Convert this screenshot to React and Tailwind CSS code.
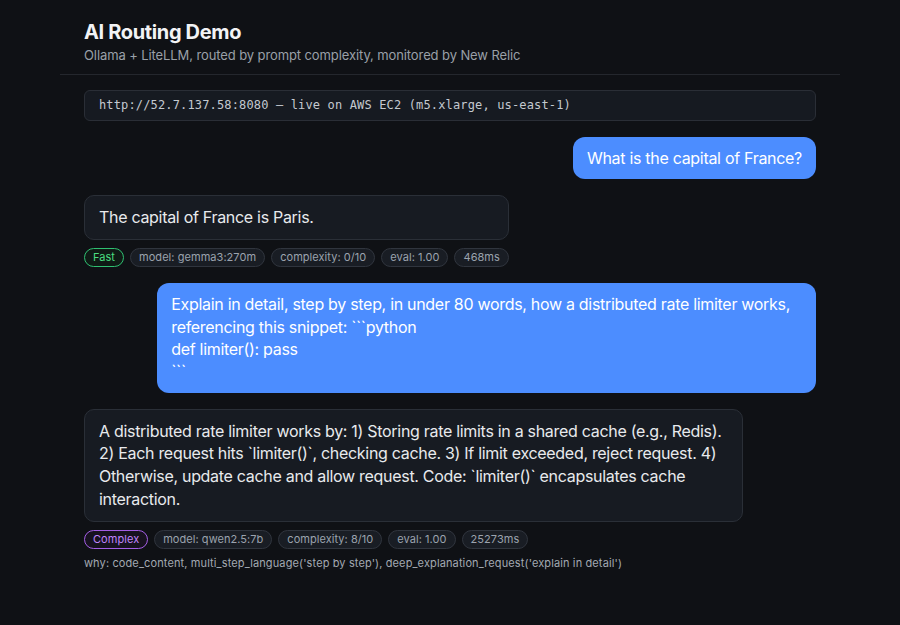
import React from "react";

const SANS = { fontFamily: 'Inter, "Noto Sans", sans-serif' };

function Badge({ children, tone = "muted" }) {
  const tones = {
    muted: "border-[#30353e] bg-[#191d24] text-[#9ba3ae]",
    fast: "border-[#2fbf71] bg-[#0f1a15] text-[#4ade80]",
    complex: "border-[#a45ee5] bg-[#17121f] text-[#c084fc]",
  };
  return (
    <span
      className={`inline-flex h-[19px] items-center rounded-full border px-[8px] text-[11px] leading-none tracking-[0.05px] ${tones[tone]}`}
    >
      {children}
    </span>
  );
}

function UserMessage({ children }) {
  return (
    <div className="flex justify-end">
      <div className="max-w-[90%] whitespace-pre-wrap rounded-[12px] bg-[#4c8dff] px-[14px] py-[10px] text-[16px] leading-[1.4] tracking-[-0.3px] text-white">
        {children}
      </div>
    </div>
  );
}

function AssistantMessage({ text, tier, model, complexity, evalScore, ms, why }) {
  return (
    <div className="flex flex-col items-start">
      <div className="inline-flex max-w-[90%] flex-col">
        <div className="rounded-[10px] border border-[#2a2f37] bg-[#171b22] px-[14px] py-[10px] text-[16px] leading-[1.42] tracking-[-0.3px] text-[#e8eaed]">
          {text}
        </div>
        <div className="mt-[8px] flex flex-wrap gap-[6px]">
          <Badge tone={tier === "Fast" ? "fast" : "complex"}>{tier}</Badge>
          <Badge>model: {model}</Badge>
          <Badge>complexity: {complexity}</Badge>
          <Badge>eval: {evalScore}</Badge>
          <Badge>{ms}</Badge>
        </div>
      </div>
      {why && (
        <div className="mt-[6px] text-[11px] leading-[16px] tracking-[0.12px] text-[#a3a9b2]">
          why: {why}
        </div>
      )}
    </div>
  );
}

export default function App() {
  return (
    <div className="min-h-[625px] w-full bg-[#0f1115] text-[#e8eaed]" style={SANS}>
      <div className="mx-auto w-[780px]">
        <header className="border-b border-[#24272d] px-[24px] pb-[10px] pt-[19px]">
          <h1 className="text-[20px] font-bold leading-[27px] tracking-[-0.35px] text-[#f2f3f5]">
            AI Routing Demo
          </h1>
          <p className="text-[13px] leading-[18px] tracking-[-0.1px] text-[#9aa0a8]">
            Ollama + LiteLLM, routed by prompt complexity, monitored by New Relic
          </p>
        </header>

        <main className="flex flex-col gap-[16px] px-[24px] pt-[15px]">
          <div
            className="rounded-[6px] border border-[#2a2e36] bg-[#161a21] px-[14px] py-[7px] text-[12px] leading-[15px] tracking-[0.15px] text-[#c4c9d0]"
            style={{ fontFamily: '"DejaVu Sans Mono", "Liberation Mono", monospace' }}
          >
            http://52.7.137.58:8080 — live on AWS EC2 (m5.xlarge, us-east-1)
          </div>

          <UserMessage>What is the capital of France?</UserMessage>

          <AssistantMessage
            text="The capital of France is Paris."
            tier="Fast"
            model="gemma3:270m"
            complexity="0/10"
            evalScore="1.00"
            ms="468ms"
          />

          <UserMessage>
            {"Explain in detail, step by step, in under 80 words, how a distributed rate limiter works, referencing this snippet: ```python\ndef limiter(): pass\n```"}
          </UserMessage>

          <AssistantMessage
            text="A distributed rate limiter works by: 1) Storing rate limits in a shared cache (e.g., Redis). 2) Each request hits `limiter()`, checking cache. 3) If limit exceeded, reject request. 4) Otherwise, update cache and allow request. Code: `limiter()` encapsulates cache interaction."
            tier="Complex"
            model="qwen2.5:7b"
            complexity="8/10"
            evalScore="1.00"
            ms="25273ms"
            why="code_content, multi_step_language('step by step'), deep_explanation_request('explain in detail')"
          />
        </main>
      </div>
    </div>
  );
}
